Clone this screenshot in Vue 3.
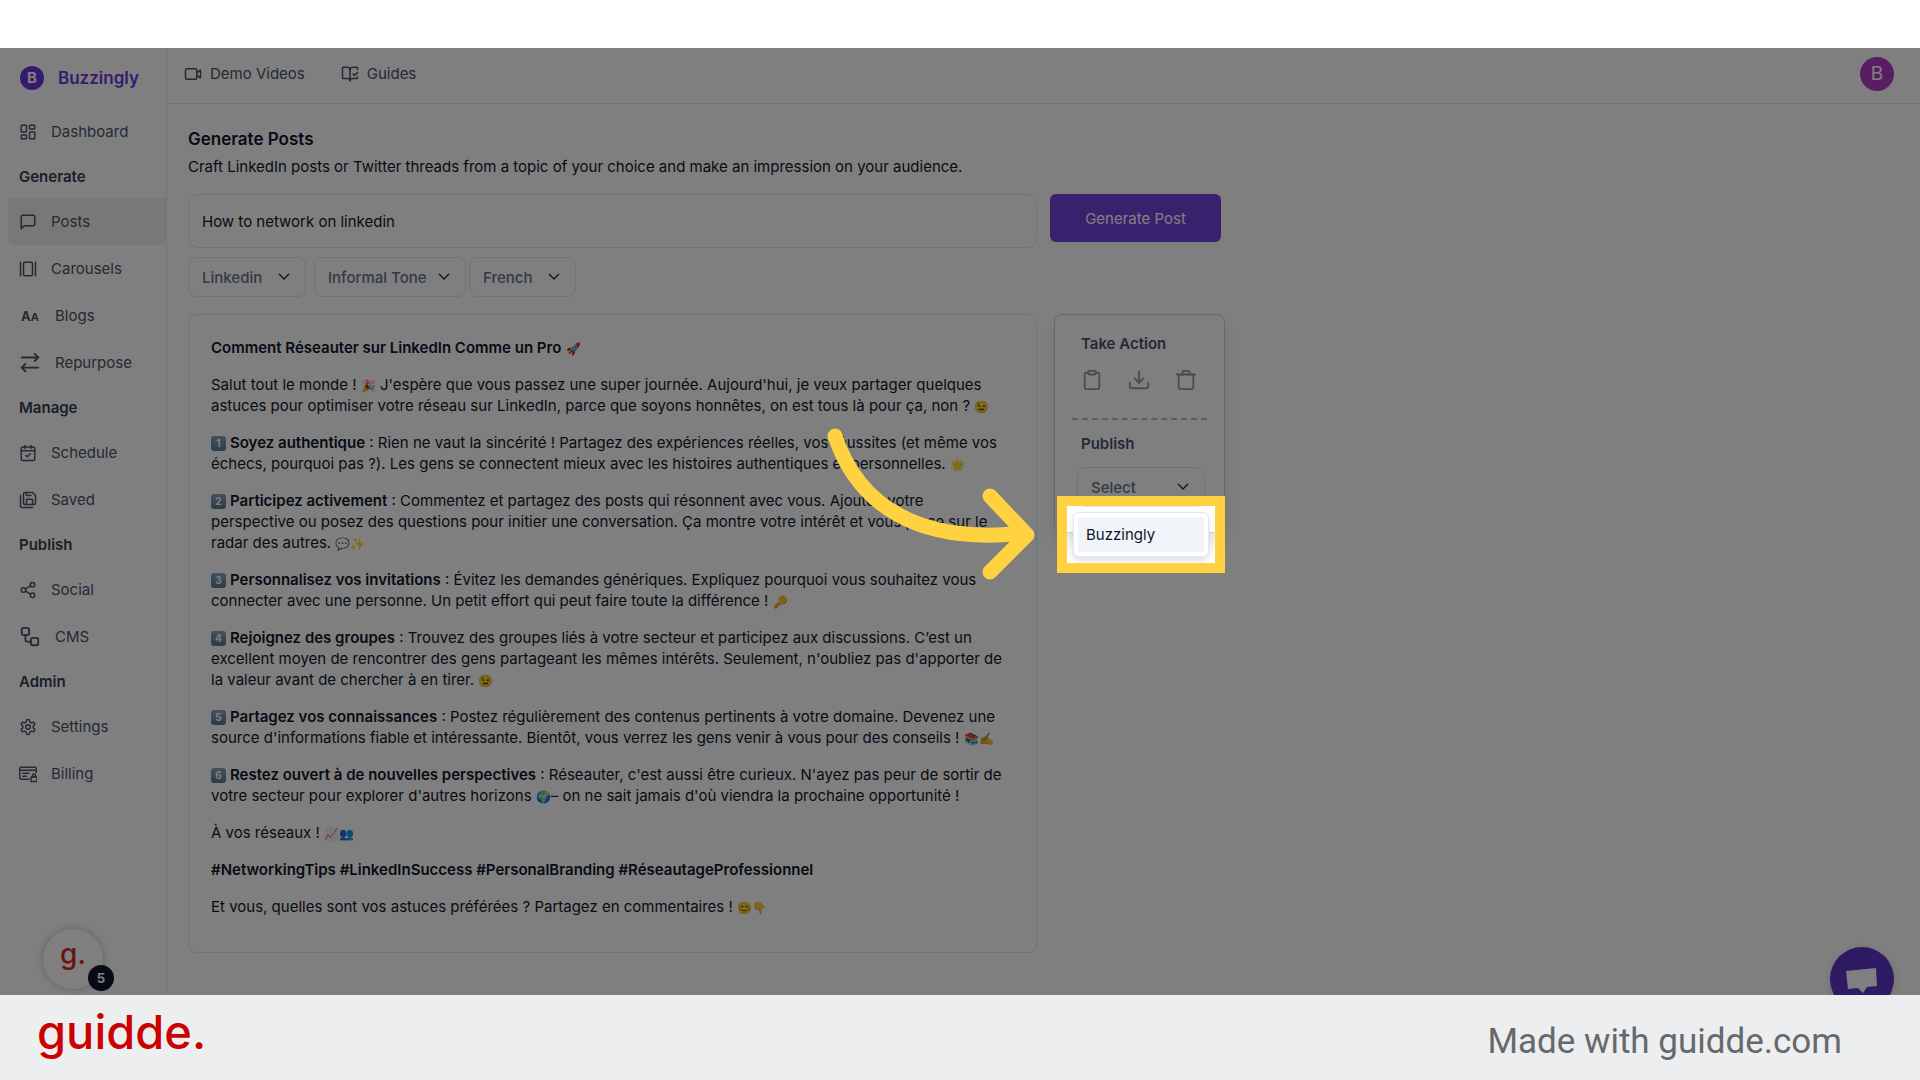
<template>
  <div class="page">
    <div class="top-strip"></div>

    <div class="stage">
      <!-- sidebar -->
      <aside class="sidebar">
        <a class="brand" href="#">
          <span class="brand-mark">B</span>
          <span>Buzzingly</span>
        </a>
        <nav>
          <template v-for="item in menu" :key="item.label">
            <h2 v-if="item.heading" class="nav-heading">{{ item.label }}</h2>
            <a v-else href="#" class="nav-item" :class="{ active: item.label === current }" @click.prevent="current = item.label">
              <span v-if="item.icon === 'caps'" class="caps" aria-hidden="true">A<small>A</small></span>
              <svg v-else class="icon" :class="{ large: item.large }" viewBox="0 0 24 24">
                <path v-for="d in icons[item.icon]" :key="d" :d="d" />
              </svg>
              <span>{{ item.label }}</span>
            </a>
          </template>
        </nav>
      </aside>

      <div class="body">
        <header class="header">
          <a v-for="link in links" :key="link.label" href="#" class="header-link">
            <svg class="icon" viewBox="0 0 24 24">
              <path v-for="d in icons[link.icon]" :key="d" :d="d" />
            </svg>
            {{ link.label }}
          </a>
          <button class="avatar" type="button" aria-label="Account">B</button>
        </header>

        <main class="content">
          <h1>Generate Posts</h1>
          <p class="intro">Craft LinkedIn posts or Twitter threads from a topic of your choice and make an impression on your audience.</p>

          <form class="topic-row" @submit.prevent>
            <input v-model="topic" class="topic" type="text" aria-label="Topic" />
            <button class="generate" type="submit">Generate Post</button>
          </form>

          <div class="filters">
            <label v-for="f in filters" :key="f.value" class="select" :class="f.name">
              <select :aria-label="f.name">
                <option>{{ f.value }}</option>
              </select>
              <svg class="chevron" viewBox="0 0 24 24"><path d="m5 8 7 7 7-7" /></svg>
            </label>
          </div>

          <div class="result-row">
            <article class="post">
              <p v-for="(p, i) in post" :key="i">
                <span v-if="p.num" class="keycap">{{ p.num }}</span>
                <strong v-if="p.bold">{{ p.bold }}</strong>
                <template v-for="(line, j) in p.lines" :key="j">
                  <br v-if="j > 0" />
                  <span v-for="(part, k) in splitEmoji(line)" :key="k" :class="{ emoji: k % 2 === 1 }">{{ part }}</span>
                </template>
              </p>
            </article>

            <aside class="actions">
              <h3>Take Action</h3>
              <div class="action-icons">
                <button v-for="a in actions" :key="a.icon" type="button" :aria-label="a.label">
                  <svg viewBox="0 0 24 24">
                    <path v-for="d in icons[a.icon]" :key="d" :d="d" />
                  </svg>
                </button>
              </div>
              <hr />
              <h3>Publish</h3>
              <div class="publish">
                <label class="select">
                  <select aria-label="Publish">
                    <option>Select</option>
                  </select>
                  <svg class="chevron" viewBox="0 0 24 24"><path d="m5 8 7 7 7-7" /></svg>
                </label>
                <div class="dropdown">
                  <button type="button">Buzzingly</button>
                  <!-- highlight frame, its shadow dims the rest of the stage -->
                  <div class="spotlight"></div>
                  <svg class="arrow" viewBox="0 0 220 160">
                    <path d="M19 20C42 89 102 129 208 117" />
                    <path d="M174 80L211 119L174 156" />
                  </svg>
                </div>
              </div>
            </aside>
          </div>
        </main>
      </div>

      <!-- floating widgets -->
      <div class="guide-widget">g.<span class="badge">5</span></div>
      <button class="chat" type="button" aria-label="Chat">
        <svg viewBox="0 0 64 64"><path d="M16 24L46 21L47 39L37 40L33 46L28 41L18 42Z" /></svg>
      </button>
    </div>

    <footer class="footer">
      <span class="logo">guidde.</span>
      <span class="made">Made with guidde.com</span>
    </footer>
  </div>
</template>

<script setup>
import { ref } from 'vue'

const current = ref('Posts')
const topic = ref('How to network on linkedin')

const menu = [
  { label: 'Dashboard', icon: 'dashboard' },
  { label: 'Generate', heading: true },
  { label: 'Posts', icon: 'message' },
  { label: 'Carousels', icon: 'carousel' },
  { label: 'Blogs', icon: 'caps' },
  { label: 'Repurpose', icon: 'swap', large: true },
  { label: 'Manage', heading: true },
  { label: 'Schedule', icon: 'calendar' },
  { label: 'Saved', icon: 'save' },
  { label: 'Publish', heading: true },
  { label: 'Social', icon: 'share' },
  { label: 'CMS', icon: 'flow', large: true },
  { label: 'Admin', heading: true },
  { label: 'Settings', icon: 'gear' },
  { label: 'Billing', icon: 'billing' }
]

const links = [
  { label: 'Demo Videos', icon: 'video' },
  { label: 'Guides', icon: 'book' }
]

const filters = [
  { name: 'platform', value: 'Linkedin' },
  { name: 'tone', value: 'Informal Tone' },
  { name: 'language', value: 'French' }
]

const actions = [
  { label: 'Copy', icon: 'clipboard' },
  { label: 'Download', icon: 'download' },
  { label: 'Delete', icon: 'trash' }
]

const post = [
  { bold: 'Comment Réseauter sur LinkedIn Comme un Pro', lines: [' 🚀'] },
  {
    lines: [
      "Salut tout le monde ! 🎉 J'espère que vous passez une super journée. Aujourd'hui, je veux partager quelques",
      'astuces pour optimiser votre réseau sur LinkedIn, parce que soyons honnêtes, on est tous là pour ça, non ? 😉'
    ]
  },
  {
    num: 1,
    bold: 'Soyez authentique',
    lines: [
      ' : Rien ne vaut la sincérité ! Partagez des expériences réelles, vos réussites (et même vos',
      'échecs, pourquoi pas ?). Les gens se connectent mieux avec les histoires authentiques et personnelles. 🌟'
    ]
  },
  {
    num: 2,
    bold: 'Participez activement',
    lines: [
      ' : Commentez et partagez des posts qui résonnent avec vous. Ajoutez votre',
      'perspective ou posez des questions pour initier une conversation. Ça montre votre intérêt et vous place sur le',
      'radar des autres. 💬✨'
    ]
  },
  {
    num: 3,
    bold: 'Personnalisez vos invitations',
    lines: [
      ' : Évitez les demandes génériques. Expliquez pourquoi vous souhaitez vous',
      'connecter avec une personne. Un petit effort qui peut faire toute la différence ! 🔑'
    ]
  },
  {
    num: 4,
    bold: 'Rejoignez des groupes',
    lines: [
      ' : Trouvez des groupes liés à votre secteur et participez aux discussions. C’est un',
      "excellent moyen de rencontrer des gens partageant les mêmes intérêts. Seulement, n'oubliez pas d'apporter de",
      'la valeur avant de chercher à en tirer. 😉'
    ]
  },
  {
    num: 5,
    bold: 'Partagez vos connaissances',
    lines: [
      ' : Postez régulièrement des contenus pertinents à votre domaine. Devenez une',
      "source d'informations fiable et intéressante. Bientôt, vous verrez les gens venir à vous pour des conseils ! 📚✍️"
    ]
  },
  {
    num: 6,
    bold: 'Restez ouvert à de nouvelles perspectives',
    lines: [
      " : Réseauter, c'est aussi être curieux. N'ayez pas peur de sortir de",
      "votre secteur pour explorer d'autres horizons 🌍– on ne sait jamais d'où viendra la prochaine opportunité !"
    ]
  },
  { lines: ['À vos réseaux ! 📈👥'] },
  { bold: '#NetworkingTips #LinkedInSuccess #PersonalBranding #RéseautageProfessionnel', lines: [] },
  { lines: ['Et vous, quelles sont vos astuces préférées ? Partagez en commentaires ! 😊👇'] }
]

// odd entries of the result are the emoji runs
const splitEmoji = (line) => line.split(/((?:\p{Extended_Pictographic}\uFE0F?)+)/u)

// 24x24 stroke icons
const icons = {
  dashboard: ['M4 3h5a1 1 0 0 1 1 1v7a1 1 0 0 1-1 1H4a1 1 0 0 1-1-1V4a1 1 0 0 1 1-1z', 'M15 3h5a1 1 0 0 1 1 1v3a1 1 0 0 1-1 1h-5a1 1 0 0 1-1-1V4a1 1 0 0 1 1-1z', 'M15 12h5a1 1 0 0 1 1 1v7a1 1 0 0 1-1 1h-5a1 1 0 0 1-1-1v-7a1 1 0 0 1 1-1z', 'M4 16h5a1 1 0 0 1 1 1v3a1 1 0 0 1-1 1H4a1 1 0 0 1-1-1v-3a1 1 0 0 1 1-1z'],
  message: ['M21 15a2 2 0 0 1-2 2H7l-4 4V5a2 2 0 0 1 2-2h14a2 2 0 0 1 2 2z'],
  carousel: ['M2 3v18', 'M8 3h8a2 2 0 0 1 2 2v14a2 2 0 0 1-2 2H8a2 2 0 0 1-2-2V5a2 2 0 0 1 2-2z', 'M22 3v18'],
  swap: ['m17 2 4 4-4 4', 'M21 6H3', 'm7 21-4-4 4-4', 'M3 17h18'],
  calendar: ['M5 4h14a2 2 0 0 1 2 2v14a2 2 0 0 1-2 2H5a2 2 0 0 1-2-2V6a2 2 0 0 1 2-2z', 'M16 2v4', 'M8 2v4', 'M3 9h18', 'm9 15 2 2 4-4'],
  save: ['M6 4a2 2 0 0 1 2-2h10l4 4v10a2 2 0 0 1-2 2H8a2 2 0 0 1-2-2Z', 'M10 2v4h6', 'M18 18v-7h-8v7', 'M18 22H4a2 2 0 0 1-2-2V6'],
  share: ['M21 5a3 3 0 1 1-6 0 3 3 0 0 1 6 0z', 'M9 12a3 3 0 1 1-6 0 3 3 0 0 1 6 0z', 'M21 19a3 3 0 1 1-6 0 3 3 0 0 1 6 0z', 'm8.6 13.5 6.8 4', 'm15.4 6.5-6.8 4'],
  flow: ['M5 2h4a2 2 0 0 1 2 2v4a2 2 0 0 1-2 2H5a2 2 0 0 1-2-2V4a2 2 0 0 1 2-2z', 'M7 10v5a2 2 0 0 0 2 2h4', 'M15 13h4a2 2 0 0 1 2 2v4a2 2 0 0 1-2 2h-4a2 2 0 0 1-2-2v-4a2 2 0 0 1 2-2z'],
  gear: ['M12.22 2h-.44a2 2 0 0 0-2 2v.18a2 2 0 0 1-1 1.73l-.43.25a2 2 0 0 1-2 0l-.15-.08a2 2 0 0 0-2.73.73l-.22.38a2 2 0 0 0 .73 2.73l.15.1a2 2 0 0 1 1 1.72v.51a2 2 0 0 1-1 1.74l-.15.09a2 2 0 0 0-.73 2.73l.22.38a2 2 0 0 0 2.73.73l.15-.08a2 2 0 0 1 2 0l.43.25a2 2 0 0 1 1 1.73V20a2 2 0 0 0 2 2h.44a2 2 0 0 0 2-2v-.18a2 2 0 0 1 1-1.73l.43-.25a2 2 0 0 1 2 0l.15.08a2 2 0 0 0 2.73-.73l.22-.39a2 2 0 0 0-.73-2.73l-.15-.08a2 2 0 0 1-1-1.74v-.5a2 2 0 0 1 1-1.74l.15-.09a2 2 0 0 0 .73-2.73l-.22-.38a2 2 0 0 0-2.73-.73l-.15.08a2 2 0 0 1-2 0l-.43-.25a2 2 0 0 1-1-1.73V4a2 2 0 0 0-2-2z', 'M15 12a3 3 0 1 1-6 0 3 3 0 0 1 6 0z'],
  billing: ['M13 19H3a2 2 0 0 1-2-2V5a2 2 0 0 1 2-2h18a2 2 0 0 1 2 2v5', 'M1 7h22', 'M5 11h8', 'M5 15h5', 'M16 16h8v6h-8z', 'M18 16v-2a2 2 0 0 1 4 0v2'],
  video: ['M4 5h11a2 2 0 0 1 2 2v10a2 2 0 0 1-2 2H4a2 2 0 0 1-2-2V7a2 2 0 0 1 2-2z', 'm17 10 5-3v10l-5-3'],
  book: ['M12 21V7', 'm16 12 2 2 4-4', 'M22 6V4a1 1 0 0 0-1-1h-5a4 4 0 0 0-4 4 4 4 0 0 0-4-4H3a1 1 0 0 0-1 1v13a1 1 0 0 0 1 1h6a3 3 0 0 1 3 3 3 3 0 0 1 3-3h6a1 1 0 0 0 1-1v-1'],
  clipboard: ['M9 2h6a1 1 0 0 1 1 1v2a1 1 0 0 1-1 1H9a1 1 0 0 1-1-1V3a1 1 0 0 1 1-1z', 'M16 4h2a2 2 0 0 1 2 2v14a2 2 0 0 1-2 2H6a2 2 0 0 1-2-2V6a2 2 0 0 1 2-2h2'],
  download: ['M2 15v4a2 2 0 0 0 2 2h16a2 2 0 0 0 2-2v-4', 'm7 10 5 5 5-5', 'M12 3v12'],
  trash: ['M2 6h20', 'M20 6v14a2 2 0 0 1-2 2H6a2 2 0 0 1-2-2V6', 'M8 6V4a2 2 0 0 1 2-2h4a2 2 0 0 1 2 2v2']
}
</script>

<style>
body {
  margin: 0;
}
</style>

<style scoped>
.page {
  min-height: 100vh;
  display: flex;
  flex-direction: column;
  background: #fff;
  color: #0f172a;
  font-family: Inter, "Liberation Sans", sans-serif;
  font-size: 15px;
}

.page *,
.page *::before {
  box-sizing: border-box;
}

a {
  color: inherit;
  text-decoration: none;
}

button,
input,
select {
  font: inherit;
  color: inherit;
}

svg {
  fill: none;
  stroke: currentColor;
  stroke-width: 2;
  stroke-linecap: round;
  stroke-linejoin: round;
}

.top-strip {
  height: 48px;
}

.stage {
  position: relative;
  flex: 1;
  display: flex;
  overflow: hidden;
}

/* sidebar */
.sidebar {
  width: 167px;
  flex: none;
  border-right: 1px solid #e2e4e8;
  color: #475569;
}

.brand {
  height: 60px;
  padding-left: 20px;
  display: flex;
  align-items: center;
  gap: 14px;
  color: #6d35dc;
  font-size: 17px;
  font-weight: 600;
}

.brand-mark {
  width: 24px;
  height: 24px;
  border-radius: 50%;
  background: #6d35dc;
  color: #fff;
  font-size: 15px;
  font-weight: 700;
  line-height: 24px;
  text-align: center;
}

.nav-heading {
  margin: 0;
  padding-left: 19px;
  color: #334155;
  font-size: 15px;
  font-weight: 600;
  line-height: 43px;
}

.nav-item {
  height: 47px;
  margin-left: 8px;
  padding-left: 11px;
  display: flex;
  align-items: center;
  gap: 14px;
  border-radius: 6px 0 0 6px;
}

.nav-item.active {
  background: #f1f1f2;
}

.icon {
  width: 18px;
  height: 18px;
  flex: none;
}

.icon.large {
  width: 22px;
  height: 22px;
}

.caps {
  width: 22px;
  padding-left: 2px;
  font-size: 13px;
  font-weight: 700;
  white-space: nowrap;
}

.caps small {
  font-size: 11px;
}

/* header */
.body {
  flex: 1;
  min-width: 0;
}

.header {
  height: 56px;
  padding: 0 26px 4px 17px;
  display: flex;
  align-items: center;
  gap: 36px;
  border-bottom: 1px solid #e2e4e8;
  color: #475569;
}

.header-link {
  display: flex;
  align-items: center;
  gap: 8px;
}

.avatar {
  width: 34px;
  height: 34px;
  margin-left: auto;
  padding: 0;
  border: 0;
  border-radius: 50%;
  background: #b03ac6;
  color: #fff;
  font-size: 19px;
}

/* content */
.content {
  padding: 23px 21px 20px;
}

h1 {
  margin: 0;
  font-size: 17px;
  font-weight: 600;
  line-height: 24px;
}

.intro {
  margin: 5px 0 16px;
  line-height: 22px;
}

.topic-row,
.result-row {
  display: grid;
  grid-template-columns: minmax(0, 849px) 171px;
  align-items: start;
}

.topic-row {
  column-gap: 13px;
}

.topic {
  height: 54px;
  padding: 0 13px;
  border: 1px solid #e2e5ec;
  border-radius: 10px;
  background: #fff;
}

.generate {
  height: 48px;
  border: 0;
  border-radius: 6px;
  background: #7343dd;
  color: #fff;
}

.filters {
  display: flex;
  margin: 9px 0 17px;
}

.select {
  position: relative;
  height: 40px;
  display: block;
  color: #64748b;
  font-weight: 500;
}

.select select {
  width: 100%;
  height: 100%;
  padding: 0 13px;
  appearance: none;
  border: 1px solid #e2e5ec;
  border-radius: 8px;
  background: #fff;
}

.chevron {
  position: absolute;
  top: 12px;
  right: 14px;
  width: 16px;
  height: 16px;
  color: #1e293b;
  pointer-events: none;
}

.platform {
  width: 118px;
  margin-right: 8px;
}

.tone {
  width: 152px;
  margin-right: 3px;
}

.language {
  width: 107px;
}

.result-row {
  column-gap: 17px;
}

.post {
  padding: 22px 22px 35px;
  border: 1px solid #e2e5ec;
  border-radius: 8px;
  line-height: 21px;
}

.post p {
  margin: 0 0 16px;
}

.post p:last-child {
  margin-bottom: 0;
}

.post strong {
  font-weight: 600;
}

.emoji {
  font-size: 12px;
  line-height: 1;
}

.keycap {
  width: 15px;
  height: 15px;
  display: inline-block;
  margin-right: 4px;
  border-radius: 3px;
  background: linear-gradient(#8aa4c0, #5a7590);
  color: #fff;
  font-size: 10px;
  font-weight: 700;
  line-height: 15px;
  text-align: center;
  vertical-align: 1px;
}

/* action card */
.actions {
  height: 219px;
  padding: 17px;
  border: 1px solid #cfd2d8;
  border-radius: 8px;
  background: #fff;
  box-shadow: 0 10px 16px rgba(0, 0, 0, 0.1);
}

.actions h3 {
  margin: 0;
  padding-left: 9px;
  color: #475569;
  font-size: 15px;
  font-weight: 600;
  line-height: 24px;
}

.action-icons {
  display: flex;
  gap: 25px;
  margin: 13px 0 27px;
  padding-left: 9px;
  color: #94979f;
}

.action-icons button {
  width: 22px;
  height: 22px;
  padding: 0;
  border: 0;
  background: none;
}

.action-icons svg {
  width: 22px;
  height: 22px;
  display: block;
}

.actions hr {
  height: 0;
  margin: 0 0 12px;
  border: 0;
  border-top: 2px dashed #b8bac0;
}

.publish {
  position: relative;
  padding: 0 2px 0 5px;
  margin-top: 11px;
}

.dropdown {
  position: absolute;
  z-index: 10;
  top: 45px;
  left: 1px;
  right: -2px;
  padding: 4px;
  border: 1px solid #e2e8f0;
  border-radius: 6px;
  background: #fff;
  box-shadow: 0 4px 6px rgba(0, 0, 0, 0.12);
}

.dropdown button {
  width: 100%;
  height: 35px;
  padding: 0 8px;
  border: 0;
  border-radius: 4px;
  background: #f1f5f9;
  text-align: left;
}

.spotlight {
  position: absolute;
  inset: -17px;
  border: 10px solid #ffd241;
  box-shadow: 0 0 0 3000px rgba(0, 0, 0, 0.5);
  pointer-events: none;
}

.arrow {
  position: absolute;
  top: -97px;
  right: 172px;
  width: 220px;
  height: 160px;
  overflow: visible;
  color: #ffd241;
  stroke-width: 15;
  pointer-events: none;
}

/* floating widgets */
.guide-widget {
  position: absolute;
  left: 43px;
  bottom: 6px;
  width: 60px;
  height: 60px;
  border-radius: 50%;
  background: #fff;
  box-shadow: 0 0 8px rgba(0, 0, 0, 0.25);
  color: #d02a22;
  font-size: 28px;
  font-weight: 500;
  line-height: 50px;
  text-align: center;
}

.badge {
  position: absolute;
  right: -11px;
  bottom: -2px;
  width: 26px;
  height: 26px;
  border-radius: 50%;
  background: #0f172a;
  color: #fff;
  font-size: 13px;
  font-weight: 700;
  line-height: 26px;
}

.chat {
  position: absolute;
  right: 26px;
  bottom: -16px;
  width: 64px;
  height: 64px;
  padding: 0;
  border: 0;
  border-radius: 50%;
  background: #5e34c8;
  box-shadow: 0 2px 8px rgba(0, 0, 0, 0.15);
}

.chat svg {
  display: block;
  fill: #fff;
  stroke: none;
}

/* footer */
.footer {
  height: 85px;
  padding: 0 78px 0 37px;
  display: flex;
  align-items: center;
  justify-content: space-between;
  background: #eceef0;
}

.logo {
  color: #cb0000;
  font-size: 47px;
  font-weight: 500;
  line-height: 60px;
  padding-bottom: 12px;
}

.made {
  color: #66696b;
  font-family: Roboto, sans-serif;
  font-size: 35px;
  padding-top: 8px;
}
</style>
